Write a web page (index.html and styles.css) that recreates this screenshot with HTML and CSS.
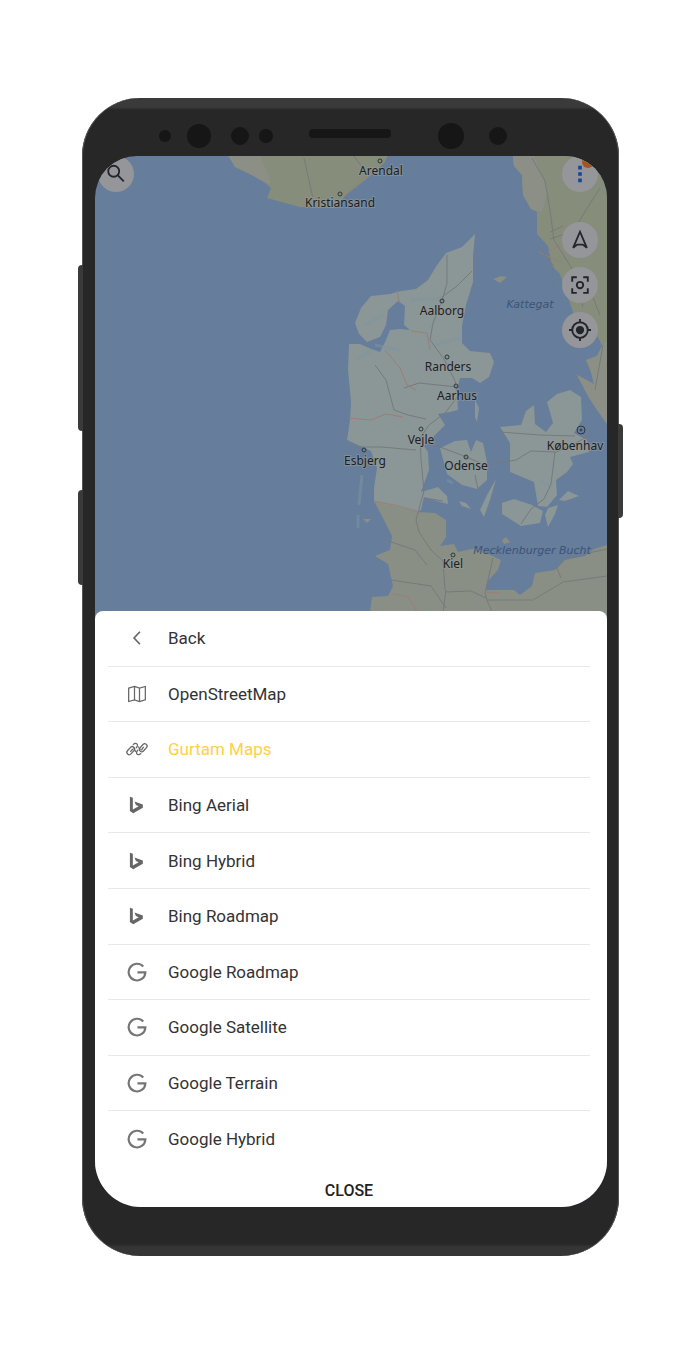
FILE: index.html
```html
<!DOCTYPE html>
<html lang="en">
<head>
    <meta charset="UTF-8">
    <meta name="viewport" content="width=device-width, initial-scale=1.0">
    <title>Map Layers</title>
    <link rel="stylesheet" href="styles.css">
</head>
<body>
    <!-- Shared icons -->
    <svg class="sprite" aria-hidden="true">
        <symbol id="icon-bing" viewBox="0 0 24 24">
            <path d="M3.500 2l3.500 1.300v14.200l7-4-3.300-1.600-1.700-4L19 11.500v3.800L7.500 22 3.500 19.300z"/>
        </symbol>
        <symbol id="icon-google" viewBox="0 0 24 24">
            <path d="M19.500 5.500A10 10 0 1 0 22 12.500H12.500" fill="none" stroke="currentColor" stroke-width="2.600"/>
        </symbol>
    </svg>

    <main class="phone">
        <span class="side-button volume"></span>
        <span class="side-button assistant"></span>
        <span class="side-button power"></span>

        <div class="sensors">
            <span class="dot small"></span>
            <span class="dot large"></span>
            <span class="dot medium"></span>
            <span class="dot regular"></span>
            <span class="speaker"></span>
            <span class="dot camera"></span>
            <span class="dot medium"></span>
        </div>

        <div class="screen">
            <section class="map">
                <svg class="map-canvas" viewBox="95 156 512 464" preserveAspectRatio="xMidYMin slice" role="img" aria-label="Map of Denmark">
                    <!-- Norway and Sweden -->
                    <path class="land-green" d="M225 150L235 167 250 174 264 182 271 188 267 198 285 203 300 207 335 208 346 195 360 184 375 172 385 162 390 150z"/>
                    <path class="land-grey" d="M225 150L235 167 250 174 264 182 271 184 268 172 262 162 260 150z"/>
                    <path class="land-green" d="M512 150L514 166 522 175 523 195 531 209 537 212 537 234 548 246 552 266 560 274 566 292 572 309 577 326 598 337 602 346 597 356 586 360 591 372 594 384 577 375 588 396 597 410 607 424V150z"/>
                    <path class="land-grey" d="M512 150L514 166 522 175 523 195 531 209 542 212 548 190 540 170 532 150zM602 346L597 356 586 360 591 372 594 384 577 375 588 396 597 410 607 424V340z"/>
                    <!-- Jutland -->
                    <path class="land" d="M475 234L462 247 446 253 437 265 428 280 416 289 401 291 390 294 371 296 361 308 355 323 359 334 367 342 380 337 386 325 388 310 398 301 405 306 404 325 410 330 400 329 390 330 386 340 380 352 369 348 360 344 349 344 348 370 351 402 350 420 347 440 360 446 371 451 377 468 374 488 374 502 417 512 421 510 424 497 440 502 448 504 447 496 438 487 421 492 429 470 428 452 424 446 434 436 445 425 438 414 450 412 458 410 457 391 460 378 472 378 480 383 489 377 494 362 490 353 470 351 462 343 462 326 466 305 473 282 473 257z"/>
                    <!-- Germany -->
                    <path class="land-german" d="M374 501L417 512 435 513 446 520 446 537 440 546 454 544 458 552 476 548 501 560 498 570 487 582 486 590 514 590 520 595 532 586 535 573 555 570 565 560 585 556 594 549 607 545V620H369L372 597 388 596 393 586 388 564 375 556 390 550 392 536 384 520z"/>
                    <!-- Islands -->
                    <path class="land" d="M440 448L455 441 467 440 471 452 476 440 483 443 487 462 487 480 477 489 462 485 447 474z"/>
                    <path class="land" d="M500 427L521 425 526 411 534 405 535 424 546 432 553 423 547 402 557 394 570 390 581 397 582 420 574 433 587 440 589 452 570 457 573 464 567 472 556 480 557 495 547 507 538 506 534 482 510 472 510 443z"/>
                    <path class="land" d="M502 503L514 499 532 505 543 511 540 523 521 526 502 514z"/>
                    <path class="land" d="M548 508L558 505 555 514 548 527 545 515z"/>
                    <path class="land" d="M559 500L568 491 579 496 565 501z"/>
                    <path class="land" d="M496 479L490 500 484 517 480 510 487 495z"/>
                    <path class="land" d="M459 501L466 503 471 509 462 506z"/>
                    <path class="land" d="M475 400L479 408 477 422 475 417z"/>
                    <path class="land-german" d="M493 279L501 276 507 277 500 283z"/>
                    <path class="land-german" d="M502 540L506 537 510 542 504 544z"/>
                    <path class="land-german" d="M363 519L371 519 367 523z"/>
                    <path class="shoal" d="M362 475l-3 30M358 515v13M410 300l35-2M365 325l20-10M355 360l18-10M435 345l26-7M375 345l25 5M540 480l12 8M447 480l6 3"/>

                    <!-- Roads -->
                    <path class="road" d="M447 255v28l-5 18-9 22-3 17 14 19 11 22 3 15-13 17-16 12-9 13 1 21 3 32-8 29 3 12 12 18 12 11 2 29M472 271l-15 15-15 11M350 447l31 0 35 3M420 441l20 6 24 9 21 9 31-5 15-9 25 1 18-8 18-10M375 365l11 15 8 30 14 5 18 4M404 388l15-5 38 4M500 432l40 3 35 1M555 452l-4 32-7 15-13 10-10 15M493 558l-8 35 3 10 8 17M488 600l45 0 30-18 44-6M561 578l-4-10 8-10 42-9M385 540l30 10 12 15M445 592l26-1 15 7M446 590l-4 30M391 580l40 6 15 22M475 475l3 14M425 498l18 3"/>
                    <path class="road-red" d="M349 418l22 2 15-6 17 3M374 501l20 4 23 6M385 350l15 18 7 17 9 5M411 331l16 2 3 17M397 290l2 12M393 594l15 3 9 14M485 592l15 1M374 169l-28 25M539 252l25 12M548 252l12-7"/>
                    <path class="road" d="M532 158l13 23 5 29 4 30 17 27 12 40M600 188l-14 22-9 15M538 246l15 19 1 25M590 290l10 25M603 345l-8 45M304 158l10 45M354 156l13 18M550 232l13-6M550 239l15-5"/>

                    <!-- Town markers -->
                    <g class="marker">
                        <circle cx="380" cy="161" r="2"/>
                        <circle cx="340" cy="194" r="2"/>
                        <circle cx="442" cy="301" r="2"/>
                        <circle cx="447" cy="357" r="2"/>
                        <circle cx="456" cy="386" r="2"/>
                        <circle cx="421" cy="429" r="2"/>
                        <circle cx="364" cy="450" r="2"/>
                        <circle cx="466" cy="457" r="2"/>
                        <circle cx="453" cy="555" r="2"/>
                        <circle cx="581" cy="430" r="4"/>
                        <circle cx="581" cy="430" r="1"/>
                    </g>

                    <g class="town">
                        <text x="381" y="175">Arendal</text>
                        <text x="340" y="207">Kristiansand</text>
                        <text x="442" y="315">Aalborg</text>
                        <text x="448" y="371">Randers</text>
                        <text x="457" y="400">Aarhus</text>
                        <text x="421" y="444">Vejle</text>
                        <text x="365" y="465">Esbjerg</text>
                        <text x="466" y="470">Odense</text>
                        <text x="453" y="568">Kiel</text>
                        <text x="575" y="450">Københav</text>
                    </g>
                    <g class="sea-name">
                        <text x="530" y="308">Kattegat</text>
                        <text x="532" y="554">Mecklenburger Bucht</text>
                    </g>
                </svg>

                <button class="map-btn search-btn" aria-label="Search">
                    <svg viewBox="0 0 24 24"><circle cx="9.500" cy="9" r="6"/><path d="M13.500 13l7 7"/></svg>
                </button>
                <div class="map-tools">
                    <button class="map-btn menu-btn" aria-label="Menu">
                        <svg viewBox="0 0 24 24"><path d="M10 3h4v4h-4zM10 10h4v4h-4zM10 17h4v4h-4z"/></svg>
                        <span class="badge"></span>
                    </button>
                    <button class="map-btn" aria-label="Navigate">
                        <svg viewBox="0 0 24 24"><path d="M12 3L4.500 20.500l4.500-3.500h6l4.500 3.500z"/></svg>
                    </button>
                    <button class="map-btn" aria-label="Fit to screen">
                        <svg viewBox="0 0 24 24"><path d="M3.500 8.500v-5h5M15.500 3.500h5v5M20.500 15.500v5h-5M8.500 20.500h-5v-5"/><circle cx="12" cy="12" r="3.500"/></svg>
                    </button>
                    <button class="map-btn" aria-label="My location">
                        <svg viewBox="0 0 24 24"><circle cx="12" cy="12" r="8.500"/><circle class="solid" cx="12" cy="12" r="3.500"/><path d="M12 0v4M12 20v4M0 12h4M20 12h4"/></svg>
                    </button>
                </div>
            </section>

            <section class="sheet">
                <ul class="layer-list">
                    <li><button class="layer">
                        <svg class="icon" viewBox="0 0 24 24"><path class="line" d="M15.500 4.500l-7 7.500 7 7.500"/></svg>
                        Back
                    </button></li>
                    <li><button class="layer">
                        <svg class="icon" viewBox="0 0 24 24"><path class="line thin" d="M2 5l7-2 6 2 7-2v16L15 21l-6-2-7 2zM9 3v16M15 5v16"/></svg>
                        OpenStreetMap
                    </button></li>
                    <li><button class="layer active">
                        <svg class="icon" viewBox="0 0 24 24">
                            <g class="line thin">
                                <rect x="-5.500" y="-2.800" width="11" height="5.600" rx="2.800" transform="translate(4.500 14) rotate(-48)"/>
                                <rect x="-5.500" y="-2.800" width="11" height="5.600" rx="2.800" transform="translate(19.500 10.500) rotate(-48)"/>
                                <path d="M4 15.500l3-3.500M17 13.500l3-4M7 7l2-1.500c2-.800 4 .500 3.500 2.500L11 11M17 17l-2 1.500c-2 .800-4-.500-3.500-2.500l1.500-3M8 11l2.500 4.500M13.500 9l2.500 4"/>
                            </g>
                        </svg>
                        Gurtam Maps
                    </button></li>
                    <li><button class="layer"><svg class="icon"><use href="#icon-bing"/></svg>Bing Aerial</button></li>
                    <li><button class="layer"><svg class="icon"><use href="#icon-bing"/></svg>Bing Hybrid</button></li>
                    <li><button class="layer"><svg class="icon"><use href="#icon-bing"/></svg>Bing Roadmap</button></li>
                    <li><button class="layer"><svg class="icon"><use href="#icon-google"/></svg>Google Roadmap</button></li>
                    <li><button class="layer"><svg class="icon"><use href="#icon-google"/></svg>Google Satellite</button></li>
                    <li><button class="layer"><svg class="icon"><use href="#icon-google"/></svg>Google Terrain</button></li>
                    <li><button class="layer"><svg class="icon"><use href="#icon-google"/></svg>Google Hybrid</button></li>
                </ul>
                <button class="close-btn">CLOSE</button>
            </section>
        </div>
    </main>
</body>
</html>
```
FILE: styles.css
```css
* {
    box-sizing: border-box;
}

body {
    margin: 0;
    padding: 98px 81px 98px 82px;
    background-color: white;
    font-family: Roboto, Arial, sans-serif;
}

button {
    border: none;
    background: none;
    padding: 0;
    font-family: inherit;
    cursor: pointer;
}

.sprite {
    position: absolute;
    width: 0;
    height: 0;
}

/* Phone frame */
.phone {
    position: relative;
    padding: 0 12px 49px 13px;
    background: linear-gradient(#3a3a3a 9px, #272727 12px, #272727 calc(100% - 12px), #353535 calc(100% - 9px));
    border-radius: 58px;
    box-shadow: inset 1px 0 #555, inset -1px 0 #555;
}

.side-button {
    position: absolute;
    width: 5px;
    background-color: #3a3a3a;
}

.volume {
    left: -4px;
    top: 167px;
    height: 166px;
    border-radius: 4px 0 0 4px;
}

.assistant {
    left: -4px;
    top: 392px;
    height: 95px;
    border-radius: 4px 0 0 4px;
}

.power {
    right: -4px;
    top: 326px;
    height: 94px;
    border-radius: 0 4px 4px 0;
}

.sensors {
    display: flex;
    align-items: center;
    height: 58px;
    padding: 17px 0 0 64px;
}

.dot {
    width: 18px;
    height: 18px;
    margin-right: 16px;
    border-radius: 50%;
    background-color: #161616;
}

.dot.small {
    width: 12px;
    height: 12px;
}

.dot.large {
    width: 24px;
    height: 24px;
    margin-right: 20px;
}

.dot.medium {
    margin-right: 10px;
}

.dot.regular {
    width: 14px;
    height: 14px;
    margin-right: 36px;
}

.speaker {
    width: 82px;
    height: 9px;
    margin: 0 47px 5px 0;
    border-radius: 4px;
    background-color: #161616;
}

.dot.camera {
    width: 26px;
    height: 26px;
    margin-right: 25px;
}

/* Screen */
.screen {
    overflow: hidden;
    border-radius: 42px 42px 46px 46px;
    background-color: #667d9b;
}

.map {
    position: relative;
    height: 455px;
}

.map-canvas {
    display: block;
    width: 100%;
    height: 464px;
}

.land {
    fill: #8b9697;
}

.land-grey {
    fill: #8b8f85;
}

.land-green {
    fill: #868d7b;
}

.land-german {
    fill: #898f85;
}

.shoal {
    fill: none;
    stroke: #7d95a2;
    stroke-width: 3;
    opacity: 0.5;
}

.road {
    fill: none;
    stroke: #777a7c;
    stroke-linejoin: round;
}

.road-red {
    fill: none;
    stroke: #9b7f74;
    stroke-linejoin: round;
}

.marker {
    fill: none;
    stroke: #303538;
}

.town {
    font: 12px "Noto Sans", sans-serif;
    text-anchor: middle;
    fill: #1c2022;
    stroke: #929b9b;
    stroke-width: 2;
    stroke-opacity: 0.6;
    paint-order: stroke;
}

.sea-name {
    font: italic 11px "DejaVu Sans", sans-serif;
    text-anchor: middle;
    fill: #3b5478;
}

.map-btn {
    position: relative;
    display: flex;
    align-items: center;
    justify-content: center;
    width: 36px;
    height: 36px;
    border-radius: 50%;
    background-color: #949699;
}

.map-btn svg {
    width: 22px;
    height: 22px;
    fill: none;
    stroke: #22262c;
    stroke-width: 2;
}

.map-btn .solid {
    fill: #22262c;
}

.search-btn {
    position: absolute;
    top: 0;
    left: 3px;
}

.map-tools {
    position: absolute;
    top: 0;
    right: 9px;
    display: flex;
    flex-direction: column;
    gap: 9px;
}

.menu-btn {
    margin-bottom: 21px;
}

.map-btn.menu-btn svg {
    fill: #1746a0;
    stroke: none;
}

.badge {
    position: absolute;
    top: 0;
    right: 4px;
    width: 12px;
    height: 12px;
    border-radius: 50%;
    background-color: #a4551f;
}

/* Layer list, drawn over the bottom edge of the map */
.sheet {
    position: relative;
    display: flex;
    flex-direction: column;
    background-color: white;
    border-radius: 8px 8px 0 0;
}

.layer-list {
    display: grid;
    grid-auto-rows: 1fr;
    min-height: 556px;
    margin: 0;
    padding: 0 17px 0 13px;
    list-style: none;
}

.layer-list li {
    display: flex;
    border-bottom: 1px solid #e8e8e8;
}

.layer-list li:last-child {
    border-bottom-color: transparent;
}

.layer {
    display: flex;
    flex: 1;
    align-items: center;
    gap: 21px;
    padding-left: 19px;
    font-size: 17px;
    color: #333;
}

.layer.active {
    color: #ffd044;
}

.icon {
    width: 20px;
    height: 20px;
    color: #757575;
    fill: #666;
    overflow: visible;
}

.line {
    fill: none;
    stroke: #666;
    stroke-width: 2;
}

.thin {
    stroke-width: 1.5;
}

.close-btn {
    height: 40px;
    padding: 6px 4px 0 0;
    font-size: 16px;
    font-weight: 500;
    color: #222;
}
```
